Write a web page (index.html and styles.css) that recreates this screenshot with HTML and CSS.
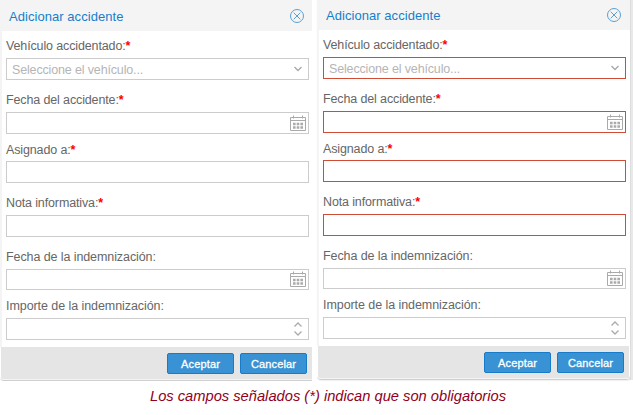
FILE: index.html
```
<!DOCTYPE html>
<html lang="es">
<head>
<meta charset="utf-8">
<title>Adicionar accidente</title>
<link rel="stylesheet" href="styles.css">
</head>
<body>
<svg width="0" height="0" class="defs">
  <symbol id="close" viewBox="0 0 14 14"><circle cx="7" cy="7" r="6.5"/><path d="M3.700 3.700l6.600 6.600M10.300 3.700l-6.600 6.600"/></symbol>
  <symbol id="chevron" viewBox="0 0 8 6"><path d="M.5 1L4 4.5 7.5 1"/></symbol>
  <symbol id="calendar" viewBox="0 0 16 17"><path d="M.5 2.5h15v13H.5zM.5 5.5h15M3.5 .5v3M12.500 .5v3"/><path class="days" d="M3 9h10M3 12.500h10"/></symbol>
  <symbol id="spinner" viewBox="0 0 8 14"><path d="M.5 4.5L4 1l3.500 3.500M.5 9.500L4 13l3.500-3.500"/></symbol>
</svg>
<main class="dialogs">
  <section class="dialog">
    <header><h1>Adicionar accidente</h1><svg class="close"><use href="#close"/></svg></header>
    <div class="form">
      <label class="l1"><span>Vehículo accidentado:</span><b>*</b></label>
      <div class="input"><span class="hint">Seleccione el vehículo...</span><svg class="chevron"><use href="#chevron"/></svg></div>
      <label class="l2"><span>Fecha del accidente:</span><b>*</b></label>
      <div class="input"><svg class="calendar"><use href="#calendar"/></svg></div>
      <label class="l3"><span>Asignado a:</span><b>*</b></label>
      <div class="input"></div>
      <label class="l4"><span>Nota informativa:</span><b>*</b></label>
      <div class="input"></div>
      <label class="l5"><span>Fecha de la indemnización:</span></label>
      <div class="input short"><svg class="calendar"><use href="#calendar"/></svg></div>
      <label class="l6"><span>Importe de la indemnización:</span></label>
      <div class="input"><svg class="spinner"><use href="#spinner"/></svg></div>
    </div>
    <footer><button>Aceptar</button><button>Cancelar</button></footer>
  </section>
  <section class="dialog invalid">
    <header><h1>Adicionar accidente</h1><svg class="close"><use href="#close"/></svg></header>
    <div class="form">
      <label class="l1"><span>Vehículo accidentado:</span><b>*</b></label>
      <div class="input error"><span class="hint">Seleccione el vehículo...</span><svg class="chevron"><use href="#chevron"/></svg></div>
      <label class="l2"><span>Fecha del accidente:</span><b>*</b></label>
      <div class="input error"><svg class="calendar"><use href="#calendar"/></svg></div>
      <label class="l3"><span>Asignado a:</span><b>*</b></label>
      <div class="input error"></div>
      <label class="l4"><span>Nota informativa:</span><b>*</b></label>
      <div class="input error"></div>
      <label class="l5"><span>Fecha de la indemnización:</span></label>
      <div class="input short"><svg class="calendar"><use href="#calendar"/></svg></div>
      <label class="l6"><span>Importe de la indemnización:</span></label>
      <div class="input"><svg class="spinner"><use href="#spinner"/></svg></div>
    </div>
    <footer><button>Aceptar</button><button>Cancelar</button></footer>
  </section>
  <div class="edge"></div>
</main>
<p class="note">Los campos señalados (*) indican que son obligatorios</p>
</body>
</html>
```
FILE: styles.css
```
* { box-sizing: border-box; }
body { margin: 0; width: 633px; height: 415px; overflow: hidden; background: #fff; font-family: "Liberation Sans", Arial, sans-serif; }
svg { fill: none; stroke: #aaa; stroke-width: 1; flex: none; }
.defs { position: absolute; }
.dialogs { display: flex; align-items: flex-start; height: 381px; }
.dialog { width: 312px; height: 381px; border-bottom: 1px solid #cfcfcf; border-radius: 0 0 0 4px; }
.dialog header { height: 31px; background: #f4f4f4; display: flex; align-items: center; justify-content: space-between; padding: 1px 8px 0 9px; }
h1 { margin: 0; font-size: 13px; font-weight: 400; letter-spacing: .05px; color: #157fcc; white-space: nowrap; }
.close { width: 14px; height: 14px; stroke: #5e9fd0; }
.form { height: 316px; border-left: 2px solid #f4f4f4; padding: 0 3px 0 4px; }
label { display: flex; height: 18px; line-height: 15px; font-size: 12.5px; letter-spacing: -.13px; color: #666; white-space: nowrap; }
label b { color: red; font-size: 12.5px; letter-spacing: 0; }
.l1 { padding-top: 8px; height: 27px; }
.l2 { margin-top: 13px; height: 19px; }
.l3 { margin-top: 9px; }
.l4 { margin-top: 13px; height: 19px; }
.l5 { margin-top: 13px; height: 19px; letter-spacing: -.09px; }
.l6 { margin-top: 9px; height: 19px; letter-spacing: -.07px; }
.input { height: 22px; border: 1px solid #ccc; display: flex; align-items: center; justify-content: flex-end; padding: 0 2px 0 5px; background: #fff; }
.input.short { height: 21px; }
.input.error { border-color: #cf4c35; }
.hint { margin-right: auto; padding-top: 1px; font-size: 12.5px; letter-spacing: -.15px; color: #b5b5b5; }
.chevron { width: 8px; height: 6px; margin-right: 4px; stroke-width: 1.4; }
.calendar { width: 16px; height: 17px; stroke: #aaa; }
.days { stroke-width: 2.4; stroke-dasharray: 2.600 1.100; }
.spinner { width: 8px; height: 14px; margin-right: 4px; stroke-width: 1.3; }
.dialog footer { height: 33px; margin-left: 1px; background: #e5e5e5; border-bottom: 1px solid #f4f4f4; border-radius: 0 0 0 3px; display: flex; justify-content: flex-end; gap: 6px; padding: 6px 5px 0 0; }
button { width: 67px; height: 21px; padding: 0; border: 1px solid #177bc9; border-radius: 2px; background: #3892d4; color: #fff; font: 11px "Liberation Sans", Arial, sans-serif; -webkit-text-stroke: .3px #fff; letter-spacing: .15px; }
.invalid { width: 313px; height: 380px; margin-left: 5px; border-radius: 0 0 4px 4px; box-shadow: 1px 0 2px #ccc; }
.invalid header { height: 30px; padding-right: 9px; padding-top: 0; }
.invalid .form { padding-right: 4px; }
.invalid footer { margin-right: 1px; }
.edge { width: 3px; height: 380px; background: linear-gradient(90deg, #ddd 1px, #e9e9e9 1px); }
.note { margin: 5px 0 0 150px; font-size: 14.7px; line-height: 20px; font-style: italic; color: #900020; white-space: nowrap; }
```
